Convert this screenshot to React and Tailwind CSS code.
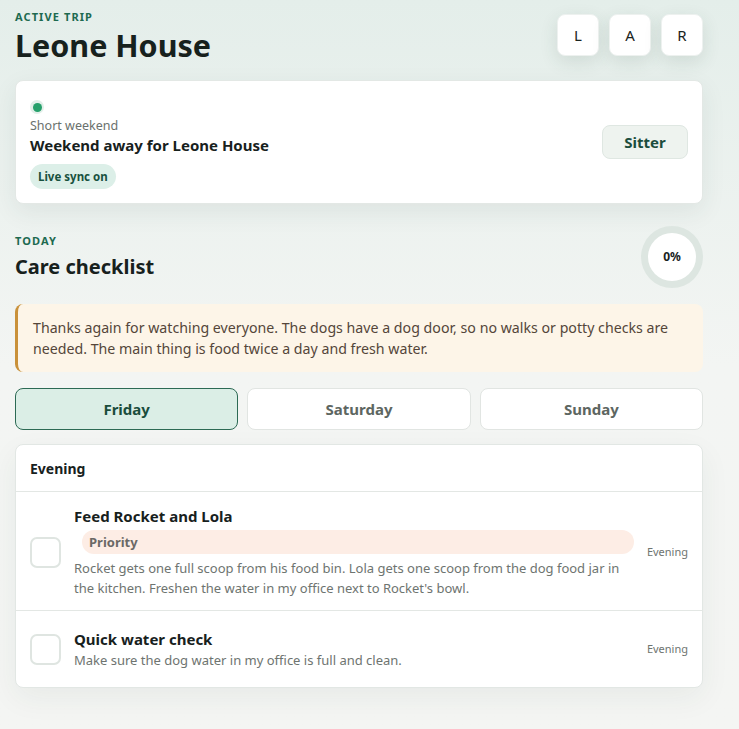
import React, { useState } from "react";

const days = ["Friday", "Saturday", "Sunday"];

const tasks = [
  {
    title: "Feed Rocket and Lola",
    priority: true,
    desc: "Rocket gets one full scoop from his food bin. Lola gets one scoop from the dog food jar in the kitchen. Freshen the water in my office next to Rocket's bowl.",
    when: "Evening",
  },
  {
    title: "Quick water check",
    priority: false,
    desc: "Make sure the dog water in my office is full and clean.",
    when: "Evening",
  },
];

const App = () => {
  const [day, setDay] = useState("Friday");
  const [done, setDone] = useState({});

  return (
    <div
      className="min-h-[729px] w-full bg-gradient-to-b from-[#e4eeea] via-[#f3f5f3] to-[#f4f5f3] text-[#17211d]"
      style={{ fontFamily: '"Noto Sans", "Open Sans", sans-serif' }}
    >
      <div className="pl-[15px] pr-[36px] pt-[9px] pb-10">
        <header className="flex items-start justify-between">
          <div>
            <div className="text-[11px] font-bold tracking-[0.1em] text-[#1d6a50] leading-[16px]">
              ACTIVE TRIP
            </div>
            <h1 className="text-[30.5px] font-bold leading-[42px] -mt-[1px]">Leone House</h1>
          </div>
          <div className="flex gap-[10px] pt-[5px]">
            {["L", "A", "R"].map((l) => (
              <button
                key={l}
                className="w-[42px] h-[42px] rounded-[8px] bg-white text-[15px] text-[#1b2421] shadow-[0_6px_18px_rgba(40,70,60,0.12)] border border-[#edf1ef]"
              >
                {l}
              </button>
            ))}
          </div>
        </header>

        <section className="mt-[14px] bg-white rounded-[8px] border border-[#e3e8e5] shadow-[0_8px_24px_rgba(40,70,60,0.08)] px-[14px] pt-[19px] pb-[14px] flex items-center justify-between">
          <div>
            <div className="w-[14px] h-[14px] rounded-full bg-[#e2efe9] flex items-center justify-center">
              <span className="w-[9px] h-[9px] rounded-full bg-[#26a06b]" />
            </div>
            <div className="text-[12.5px] text-[#6a716d] leading-[18px] mt-[3px]">Short weekend</div>
            <div className="text-[15px] font-bold leading-[21px]">Weekend away for Leone House</div>
            <span className="inline-block mt-[8px] px-[8px] py-[3px] rounded-full bg-[#dcefe8] text-[11.5px] font-bold text-[#17513e] leading-[19px]">
              Live sync on
            </span>
          </div>
          <button className="w-[86px] h-[34px] rounded-[8px] bg-[#eef3ef] border border-[#dfe7e2] text-[15px] font-bold text-[#1b4d3d] -mt-[5px]">
            Sitter
          </button>
        </section>

        <section className="mt-[21px] flex items-start justify-between">
          <div>
            <div className="text-[11px] font-bold tracking-[0.1em] text-[#1d6a50] leading-[16px] mt-[8px]">TODAY</div>
            <h2 className="text-[20px] font-bold leading-[28px] mt-[4px]">Care checklist</h2>
          </div>
          <div className="w-[62px] h-[62px] mt-[1px] rounded-full bg-[#dde6e1] flex items-center justify-center">
            <div className="w-[48px] h-[48px] rounded-full bg-white flex items-center justify-center text-[12px] font-bold text-[#17211d]">
              0%
            </div>
          </div>
        </section>

        <div className="mt-[16px] rounded-[8px] border-l-[3px] border-[#c9913a] bg-[#fdf5e8] pl-[15px] pr-[16px] pt-[13px] pb-[13px] text-[14.2px] leading-[21px] text-[#54463a]">
          Thanks again for watching everyone. The dogs have a dog door, so no walks or potty checks are needed. The main thing is food twice a day and fresh water.
        </div>

        <div className="mt-[16px] grid grid-cols-3 gap-[9px]">
          {days.map((d) => (
            <button
              key={d}
              onClick={() => setDay(d)}
              className={
                d === day
                  ? "h-[42px] rounded-[8px] border border-[#2c6a54] bg-[#dbeee6] text-[15px] font-bold text-[#1a4d3c]"
                  : "h-[42px] rounded-[8px] border border-[#e1e5e2] bg-white text-[15px] font-bold text-[#5d6661]"
              }
            >
              {d}
            </button>
          ))}
        </div>

        <section className="mt-[14px] bg-white rounded-[8px] border border-[#e2e7e4] shadow-[0_10px_30px_rgba(40,60,50,0.06)]">
          <div className="h-[47px] px-[14px] flex items-center text-[14px] font-bold border-b border-[#e3e7e4]">
            Evening
          </div>
          {tasks.map((t, i) => (
            <div
              key={t.title}
              className={
                "flex items-center gap-[13px] pl-[14px] pr-[14px] " +
                (i === 0 ? "pt-[14px] pb-[12px] border-b border-[#e3e7e4]" : "pt-[18px] pb-[17px]")
              }
            >
              <button
                onClick={() => setDone({ ...done, [t.title]: !done[t.title] })}
                className="w-[31px] h-[31px] shrink-0 rounded-[7px] border-2 border-[#dfe5e1] bg-white"
              />
              <div className="flex-1 flex flex-col">
                <div className="text-[15px] font-bold leading-[20px]">{t.title}</div>
                {t.priority && (
                  <div className="ml-[8px] mt-[4px] mb-[3px] rounded-full bg-[#fdede5] px-[7px] text-[13px] font-bold text-[#6b6966] leading-[24px]">
                    Priority
                  </div>
                )}
                <div className="text-[13px] leading-[20px] text-[#6e7470] mt-[1px]">{t.desc}</div>
              </div>
              <div className="shrink-0 text-right text-[11px] text-[#6e7470]">{t.when}</div>
            </div>
          ))}
        </section>
      </div>
    </div>
  );
};

export default App;
